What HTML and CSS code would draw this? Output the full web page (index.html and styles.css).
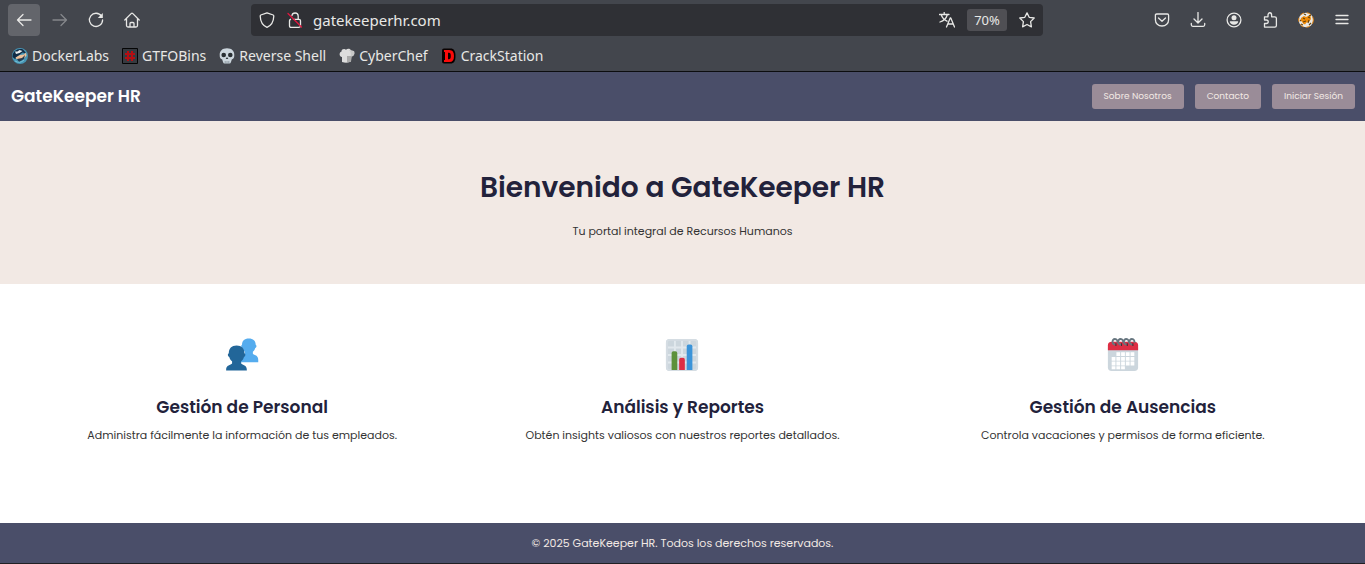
FILE: index.html
```html
<!DOCTYPE html>
<html lang="es">
<head>
<meta charset="utf-8">
<meta name="viewport" content="width=device-width, initial-scale=1">
<title>GateKeeper HR</title>
<link rel="stylesheet" href="styles.css">
</head>
<body>
<div class="browser">
  <div class="toolbar">
    <button class="tool tool-active" aria-label="Atrás"><svg class="icon" viewBox="0 0 16 16"><path d="M15 8H1.500M7 2.500 1.500 8 7 13.500"/></svg></button>
    <button class="tool tool-disabled" aria-label="Adelante" disabled><svg class="icon" viewBox="0 0 16 16"><path d="M1 8h13.500M9 2.500 14.500 8 9 13.500"/></svg></button>
    <button class="tool" aria-label="Recargar"><svg class="icon" viewBox="0 0 16 16"><path d="M13.500 4.200A6.600 6.600 0 1 0 14.600 8"/><path d="M14.800 1v5H9.800z" fill="currentColor" stroke="none"/></svg></button>
    <button class="tool" aria-label="Inicio"><svg class="icon" viewBox="0 0 16 16"><path d="M.8 8 7.400 1.400q.6-.5 1.200 0L15.200 8M2.500 6.800v6.700q0 1.500 1.500 1.500h8q1.500 0 1.500-1.500V6.800M6 15v-3.500q0-1 1-1h2q1 0 1 1V15"/></svg></button>
    <div class="address">
      <svg class="icon" viewBox="0 0 16 16"><path d="M8 .8 14.200 3q.6.300.6 1C14.600 9.500 12.500 13.500 8 15.300 3.500 13.500 1.400 9.500 1.200 4q0-.7.6-1z"/></svg>
      <svg class="icon" viewBox="0 0 16 16"><path d="M5 3.500C5.400.2 11 0 11.200 4v3M6.500 7.300H12q1.500 0 1.500 1.500v5q0 1.500-1.500 1.500H4q-1.500 0-1.500-1.500v-5q0-1 1-1.500"/><path class="slash" d="M1 1.500 14.500 15"/></svg>
      <input class="url" type="text" value="gatekeeperhr.com" aria-label="Dirección">
      <button class="address-button" aria-label="Traducir"><svg class="icon" viewBox="0 0 16 16"><path d="M.5 2.500h9.500M5.200.5v2M2.300 3c1 3 3.200 5 5.700 6.200M8.200 3C7.300 6.300 4.500 8.800 1 10M7.500 15l3.700-9h.6l3.700 9M9 12h5"/></svg></button>
      <button class="zoom">70%</button>
      <button class="address-button" aria-label="Favorito"><svg class="icon" viewBox="0 0 16 16"><path d="M8 .9 10.200 5.300 15.200 6 11.600 9.600 12.400 14.800 8 12.500 3.600 14.800 4.400 9.600.8 6l5-.7z"/></svg></button>
    </div>
    <button class="tool" aria-label="Pocket"><svg class="icon" viewBox="0 0 16 16"><path d="M2.600 2h10.800q1.200 0 1.200 1.200v4.500C14.600 11.500 11.800 14 8 14S1.400 11.500 1.400 7.700V3.200Q1.400 2 2.600 2zM4.500 6 8 9.300 11.500 6"/></svg></button>
    <button class="tool" aria-label="Descargas"><svg class="icon" viewBox="0 0 16 16"><path d="M8 .5v10.300M4 7l4 4 4-4M1.300 11.500v1.300q0 1.500 1.500 1.500h10.400q1.500 0 1.500-1.500v-1.300"/></svg></button>
    <button class="tool" aria-label="Cuenta"><svg class="icon" viewBox="0 0 16 16"><circle cx="8" cy="8" r="6.900"/><circle cx="8" cy="5.800" r="2.500" fill="currentColor" stroke="none"/><path d="M3.800 9.300h8.400c0 2-2 3.500-4.200 3.500s-4.200-1.500-4.200-3.500z" fill="currentColor" stroke="none"/></svg></button>
    <button class="tool" aria-label="Extensiones"><svg class="icon" viewBox="0 0 16 16"><path d="M2.500 4.800H6V3c0-3 3.600-3 3.600 0v1.800h3.200q1.600 0 1.600 1.500v7.200q0 1.600-1.600 1.600H2.500v-3.600h1.800c2.600 0 2.600-3.500 0-3.500H2.500z"/></svg></button>
    <button class="tool" aria-label="FoxyProxy"><svg class="art" viewBox="0 0 16 16"><circle cx="8" cy="8" r="7.300" fill="#e9e9e6" stroke="#e68713" stroke-dasharray="4 3"/><path d="m3 6 3-2 2 1 3-1.500 2-1.500-.5 3 .5 2-2 3-2.500.5-1.500 2-2-1-1-2-1.500-.5z" fill="#ef8a06"/><path d="m5 6 2 1m3-2 2 1M5 10l3-1m2 2 1-3m2-5-2 1M3 12l2 1M11 13l2-2M2 8l1 1M6 2l2 1" stroke="#67450f" stroke-width="1.100"/></svg></button>
    <button class="tool" aria-label="Menú"><svg class="icon" viewBox="0 0 16 16"><path d="M2 3.500h12M2 7.500h12M2 11.500h12"/></svg></button>
  </div>
  <nav class="bookmarks" aria-label="Marcadores">
    <a class="bookmark" href="#"><svg class="art" viewBox="0 0 16 16"><circle cx="8" cy="8" r="8" fill="#4795b5"/><path d="M.5 9C.5 3 6 0 11 1.500l3.500 4-4-1L6 8l-3 3z" fill="#102b45"/><path d="m3 3.500 2.500 0 2-1.500 3 1-3 2-3.500 1z" fill="#e7edef"/><path d="m3.500 9.500 4.500-2.500 4-.5 2-2 .5 3-2.500 3-5 1-2.500-.5z" fill="#edc09a"/><path d="m5 11 5-1 3-3-1 4-5 3z" fill="#253b50"/><path d="M3 13q5 3 9-1" stroke="#75c2d7" fill="none"/></svg>DockerLabs</a>
    <a class="bookmark" href="#"><svg class="art" viewBox="0 0 16 16"><path d="M.5.500h15v15H.5z" fill="#363a40" stroke="#050505"/><path d="M6 3v10M10 3v10M3 6h10M3 10h10" stroke="#b50d12" stroke-width="2"/></svg>GTFOBins</a>
    <a class="bookmark" href="#"><svg class="art" viewBox="0 0 16 16"><path d="M8 .3C3 .3.7 3.200.7 7c0 2 .2 4 2.500 4.500L4 14q.5 1.800 2 1.500h4q1.500.3 2-1.500l.8-2.500C15 11 15.300 9 15.300 7 15.300 3.200 13 .3 8 .3z" fill="#ccd6dd"/><circle cx="4.700" cy="7" r="2.300" fill="#292f33"/><circle cx="11.300" cy="7" r="2.300" fill="#292f33"/><path d="m8 9-1.300 2h2.600z" fill="#292f33"/><path d="M6.200 13v2.500M8 13v2.500M9.800 13v2.500" stroke="#75828b" stroke-width=".7"/></svg>Reverse Shell</a>
    <a class="bookmark" href="#"><svg class="art" viewBox="0 0 16 16"><path d="M3 9C0 8.500-.2 4.500 2.500 3.500 2.500 1 5.500.5 7 1.800 8.500.2 11.500.5 12 2.500c3-.3 4.500 3.500 2 5.500L12 9v4.500q-4 2-9 .5z" fill="#ddd"/><path d="M8 8h5l-1 5.500q-2 1-4 1z" fill="#aaa"/><path d="M9.500 2q3 1 2 6h2q3-2 1.500-5l-3-.5z" fill="#c8c8c8"/></svg>CyberChef</a>
    <a class="bookmark" href="#"><svg class="art" viewBox="0 0 16 16"><path d="M1 2.500Q1 .5 3 .5h6.500C13 .5 14.500 3 14.500 8s-1.500 7.500-5 7.500H3q-2 0-2-2z" fill="#090000"/><path d="M3 2h5.500Q13 2 13 8t-4.500 6H3v-2h1V4H3zM7 4.800v6.400h1q1.800 0 1.800-3.200T8 4.800z" fill="#fb0a0a" fill-rule="evenodd"/></svg>CrackStation</a>
  </nav>
</div>
<header class="site-header">
  <div class="brand">GateKeeper HR</div>
  <nav class="site-nav"><a class="nav-link" href="#">Sobre Nosotros</a><a class="nav-link" href="#">Contacto</a><a class="nav-link" href="#">Iniciar Sesión</a></nav>
</header>
<main class="content">
  <section class="hero">
    <h1 class="hero-title">Bienvenido a GateKeeper HR</h1>
    <p class="text">Tu portal integral de Recursos Humanos</p>
  </section>
  <section class="features">
    <article class="feature">
      <svg class="feature-icon" viewBox="0 0 36 36"><path d="M18.500 10.500c-1.500-.5-1.800-2.500-.5-3.300C18 3 20.500.5 25.200.5S32.500 3 32.500 7.200c1.300.8 1 2.800-.5 3.300-.5 1.700-1.300 3-2.500 4v2.200c1.200 1.500 5.700 1.500 5.700 6.500v2.500H15v-2.500c0-5 4.800-5 6-6.500v-2.200c-1.200-1-2-2.300-2.500-4z" fill="#55acee"/><path d="M4.500 20c-1.800-.6-2-3-.5-3.800C4 11 7 8 12.300 8s8.300 3 8.300 8.200c1.500.8 1.300 3.200-.5 3.800-.5 2-1.500 3.500-3 4.700V27c1.500 1.800 6 1.500 6 6.500v1H1.200v-1c0-5 4.800-4.700 6.300-6.500v-2.300c-1.500-1.200-2.500-2.700-3-4.700z" fill="#226699"/></svg>
      <h2 class="feature-title">Gestión de Personal</h2>
      <p class="text">Administra fácilmente la información de tus empleados.</p>
    </article>
    <article class="feature">
      <svg class="feature-icon" viewBox="0 0 36 36"><rect x="1" y="1" width="34" height="34" rx="4" fill="#ccd6dd"/><path d="M3 10h30M3 18h30M3 26h30M10.500 3v30M18 3v30M26 3v30" stroke="#e1e8ed" stroke-width="2"/><rect x="2" y="2" width="32" height="32" rx="3" fill="none" stroke="#d5dde3" stroke-width="2"/><path d="M7 34V16q0-2 2-2h2q2 0 2 2v18z" fill="#5c913b"/><path d="M15 34V23q0-2 2-2h2q2 0 2 2v11z" fill="#dd2e44"/><path d="M23 34V9q0-2 2-2h2q2 0 2 2v25z" fill="#3b94d9"/></svg>
      <h2 class="feature-title">Análisis y Reportes</h2>
      <p class="text">Obtén insights valiosos con nuestros reportes detallados.</p>
    </article>
    <article class="feature">
      <svg class="feature-icon" viewBox="0 0 36 36"><path d="M2 10h32v21q0 4-4 4H6q-4 0-4-4z" fill="#ccd6dd"/><path d="M2 13V8q0-4 4-4h24q4 0 4 4v5z" fill="#dd2e44"/><path d="M11 15h4v4h-4zm5 0h4v4h-4zm5 0h4v4h-4zm5 0h4v4h-4zM6 20h4v4H6zm5 0h4v4h-4zm5 0h4v4h-4zm5 0h4v4h-4zm5 0h4v4h-4zM6 25h4v4H6zm5 0h4v4h-4zm5 0h4v4h-4zm5 0h4v4h-4zm5 0h4v4h-4zM6 30h4v3H6zm5 0h4v3h-4zm5 0h4v3h-4z" fill="#fff"/><path d="M10 7c-4 0-4-6-.500-6 2 0 3 2 2.500 4M16 7c-4 0-4-6-.500-6 2 0 3 2 2.500 4M22 7c-4 0-4-6-.500-6 2 0 3 2 2.500 4M28 7c-4 0-4-6-.500-6 2 0 3 2 2.500 4" fill="none" stroke="#66757f" stroke-width="2"/><path d="M10 7h1M16 7h1M22 7h1M28 7h1" stroke="#292f33" stroke-width="3"/></svg>
      <h2 class="feature-title">Gestión de Ausencias</h2>
      <p class="text">Controla vacaciones y permisos de forma eficiente.</p>
    </article>
  </section>
</main>
<footer class="site-footer">© 2025 GateKeeper HR. Todos los derechos reservados.</footer>
</body>
</html>
```
FILE: styles.css
```css
* { box-sizing: border-box; }
body {
  margin: 0;
  min-height: 100vh;
  display: flex;
  flex-direction: column;
  font-family: Poppins, Inter, sans-serif;
  font-size: 11px;
  line-height: 18px;
  color: #333;
  background: #fff;
}
button, input { font: inherit; color: inherit; border: 0; padding: 0; background: none; }
a { color: inherit; text-decoration: none; }
h1, h2, p { margin: 0; }

.browser {
  background: #43464d;
  color: #e8e8e6;
  font-family: "Noto Sans", sans-serif;
  border-bottom: 1px solid #0c0d0f;
}
.toolbar { display: flex; gap: 4px; padding: 4px 7px 4px 8px; }
.tool { width: 32px; height: 32px; flex: none; display: grid; place-items: center; border-radius: 4px; }
.tool-active { background: #63656b; }
.tool-disabled { color: #85878b; }
.icon { width: 16px; height: 16px; flex: none; display: block; fill: none; stroke: currentColor; stroke-width: 1.3; stroke-linejoin: round; stroke-linecap: round; }
.art { width: 16px; height: 16px; flex: none; display: block; }
.slash { stroke: #e0163f; }
.address {
  flex: 1;
  min-width: 0;
  height: 32px;
  margin: 0 99px;
  padding: 0 8px;
  display: flex;
  align-items: center;
  gap: 12px;
  background: #2f3035;
  border-radius: 4px;
}
.url { flex: 1; min-width: 0; height: 32px; margin-left: -2px; font-size: 15px; line-height: 24px; }
.address-button { flex: none; }
.zoom { width: 40px; height: 22px; background: #4f4f54; border-radius: 3px; font-size: 13px; }
.bookmarks { display: flex; gap: 13px; padding: 5px 12px; height: 31px; font-size: 14px; line-height: 22px; }
.bookmark { display: flex; align-items: center; gap: 4px; white-space: nowrap; }

.site-header {
  display: flex;
  align-items: center;
  justify-content: space-between;
  padding: 12px 10px 12px 11px;
  background: #4a4e69;
  color: #fff;
}
.brand { font-size: 17px; font-weight: 600; line-height: 25px; }
.site-nav { display: flex; gap: 11px; }
.nav-link { padding: 0 12px; font-size: 9px; line-height: 25px; color: #f2e9e4; background: #9a8c98; border-radius: 3px; }

.content { flex: 1; }
.hero { padding: 45px 20px 44px; text-align: center; background: #f2e9e4; }
.hero-title { margin-bottom: 12px; font-size: 28px; line-height: 44px; font-weight: 600; color: #22223b; }
.features { display: grid; grid-template-columns: repeat(3, 1fr); gap: 22px; padding: 54px 33px; text-align: center; }
.feature-icon { width: 34px; height: 34px; display: block; margin: 0 auto 22px; }
.feature-title { margin-bottom: 6px; font-size: 17px; line-height: 26px; font-weight: 600; color: #22223b; }
.text { line-height: 18px; }

.site-footer { padding: 11px; text-align: center; background: #4a4e69; color: #f2e9e4; border-bottom: 1px solid #202024; }
```
